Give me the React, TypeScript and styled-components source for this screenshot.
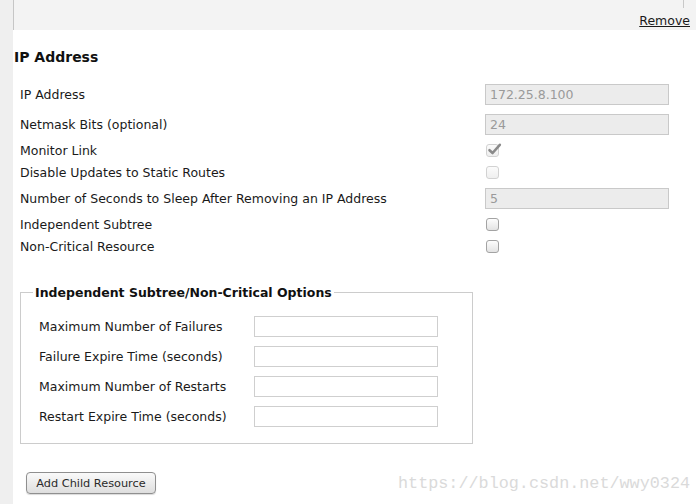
import React from "react";
import styled, { createGlobalStyle } from "styled-components";

const Global = createGlobalStyle`
  html, body { margin: 0; padding: 0; background: #ffffff; }
  body { font-family: "DejaVu Sans", Verdana, sans-serif; color: #1a1a1a; }
  * { box-sizing: border-box; }
`;

const Page = styled.div`
  position: relative;
  display: flex;
  width: 700px;
  height: 504px;
  overflow: hidden;
  background: #ffffff;
`;

const Rail = styled.div`
  width: 13px;
  flex: none;
  background: #efefef;
`;

const Main = styled.div`
  flex: 1;
  display: flex;
  flex-direction: column;
  padding-right: 4px;
`;

const Header = styled.div`
  height: 30px;
  background: #f3f3f3;
  border-left: 1px solid #c6c6c6;
  display: flex;
  flex-direction: column;
  align-items: flex-end;
  padding-right: 6px;
`;

const TickLine = styled.div`
  width: 1px;
  height: 8px;
  background: #c8c8c8;
  margin-right: 6px;
`;

const RemoveLink = styled.a`
  margin-top: 5px;
  font-size: 12.5px;
  color: #1a1a1a;
  text-decoration: underline;
  cursor: pointer;
`;

const Heading = styled.h2`
  margin: 19px 0 0 1px;
  font-size: 14px;
  font-weight: bold;
  line-height: 17px;
  color: #111;
`;

const Form = styled.div`
  margin-top: 13px;
  display: grid;
  grid-template-columns: 465px 184px;
  padding-left: 7px;
`;

const Label = styled.div<{ $h: number }>`
  height: ${(p) => p.$h}px;
  display: flex;
  align-items: center;
  font-size: 12.5px;
  color: #1a1a1a;
  white-space: nowrap;
`;

const Cell = styled.div<{ $h: number }>`
  height: ${(p) => p.$h}px;
  display: flex;
  align-items: center;
`;

const TextBox = styled.input<{ $disabled?: boolean }>`
  width: 184px;
  height: 21px;
  margin: 0;
  padding: 0 4px;
  font-family: "DejaVu Sans", sans-serif;
  font-size: 12.5px;
  color: #9a9a9a;
  background: ${(p) => (p.$disabled ? "#ececec" : "#ffffff")};
  border: 1px solid ${(p) => (p.$disabled ? "#c9c9c9" : "#cfcfcf")};
  border-radius: 0;
  outline: none;
`;

const Box = styled.span<{ $faded?: boolean }>`
  position: relative;
  width: 13px;
  height: 13px;
  margin-left: 1px;
  border-radius: 3px;
  border: 1px solid ${(p) => (p.$faded ? "#d2d2d2" : "#a3a3a3")};
  background: ${(p) =>
    p.$faded
      ? "linear-gradient(#fbfbfb, #efefef)"
      : "linear-gradient(#fdfdfd, #e3e3e3)"};
  display: inline-flex;
  align-items: center;
  justify-content: center;
`;

const Check = styled.svg`
  position: absolute;
  left: 0px;
  top: -3px;
`;

const Fieldset = styled.fieldset`
  margin: 28px 0 0 7px;
  width: 453px;
  padding: 2px 12px 12px 12px;
  border: 1px solid #cccccc;
`;

const Legend = styled.legend`
  padding: 0 2px;
  font-size: 12.5px;
  font-weight: bold;
  color: #111;
`;

const SubForm = styled.div`
  margin-top: 9px;
  display: grid;
  grid-template-columns: 215px 184px;
  padding-left: 6px;
`;

const Button = styled.button`
  margin: 28px 0 0 13px;
  align-self: flex-start;
  width: 130px;
  height: 22px;
  padding: 0;
  font-family: "DejaVu Sans", sans-serif;
  font-size: 11.3px;
  color: #2a2a2a;
  border: 1px solid #8f8f8f;
  border-radius: 4px;
  background: linear-gradient(#fafafa, #dedede);
  box-shadow: 0 1px 1px rgba(0, 0, 0, 0.15);
`;

const Watermark = styled.div`
  position: absolute;
  left: 398px;
  top: 474px;
  font-family: "Liberation Mono", "DejaVu Sans Mono", monospace;
  font-size: 16.8px;
  color: #dadada;
  white-space: nowrap;
`;

type Row =
  | { label: string; kind: "text"; value: string }
  | { label: string; kind: "check"; checked?: boolean; faded?: boolean };

const rows: Row[] = [
  { label: "IP Address", kind: "text", value: "172.25.8.100" },
  { label: "Netmask Bits (optional)", kind: "text", value: "24" },
  { label: "Monitor Link", kind: "check", checked: true, faded: true },
  { label: "Disable Updates to Static Routes", kind: "check", faded: true },
  { label: "Number of Seconds to Sleep After Removing an IP Address", kind: "text", value: "5" },
  { label: "Independent Subtree", kind: "check" },
  { label: "Non-Critical Resource", kind: "check" },
];

const subRows = [
  "Maximum Number of Failures",
  "Failure Expire Time (seconds)",
  "Maximum Number of Restarts",
  "Restart Expire Time (seconds)",
];

function CheckBox({ checked, faded }: { checked?: boolean; faded?: boolean }) {
  return (
    <Box $faded={faded}>
      {checked && (
        <Check width="15" height="14" viewBox="0 0 15 14">
          <path d="M2.5 8.2 L5.6 11 L12.8 2.8" fill="none" stroke="#8a8a8a" strokeWidth="2.6" strokeLinecap="round" strokeLinejoin="round" />
        </Check>
      )}
    </Box>
  );
}

export default function App() {
  return (
    <Page>
      <Global />
      <Rail />
      <Main>
        <Header>
          <TickLine />
          <RemoveLink>Remove</RemoveLink>
        </Header>
        <Heading>IP Address</Heading>
        <Form>
          {rows.map((r) => {
            const h = r.kind === "text" ? 30 : 22;
            return (
              <React.Fragment key={r.label}>
                <Label $h={h}>{r.label}</Label>
                <Cell $h={h}>
                  {r.kind === "text" ? (
                    <TextBox $disabled readOnly value={r.value} />
                  ) : (
                    <CheckBox checked={r.checked} faded={r.faded} />
                  )}
                </Cell>
              </React.Fragment>
            );
          })}
        </Form>
        <Fieldset>
          <Legend>Independent Subtree/Non-Critical Options</Legend>
          <SubForm>
            {subRows.map((l) => (
              <React.Fragment key={l}>
                <Label $h={30}>{l}</Label>
                <Cell $h={30}>
                  <TextBox readOnly value="" />
                </Cell>
              </React.Fragment>
            ))}
          </SubForm>
        </Fieldset>
        <Button>Add Child Resource</Button>
      </Main>
      <Watermark>https://blog.csdn.net/wwy0324</Watermark>
    </Page>
  );
}
